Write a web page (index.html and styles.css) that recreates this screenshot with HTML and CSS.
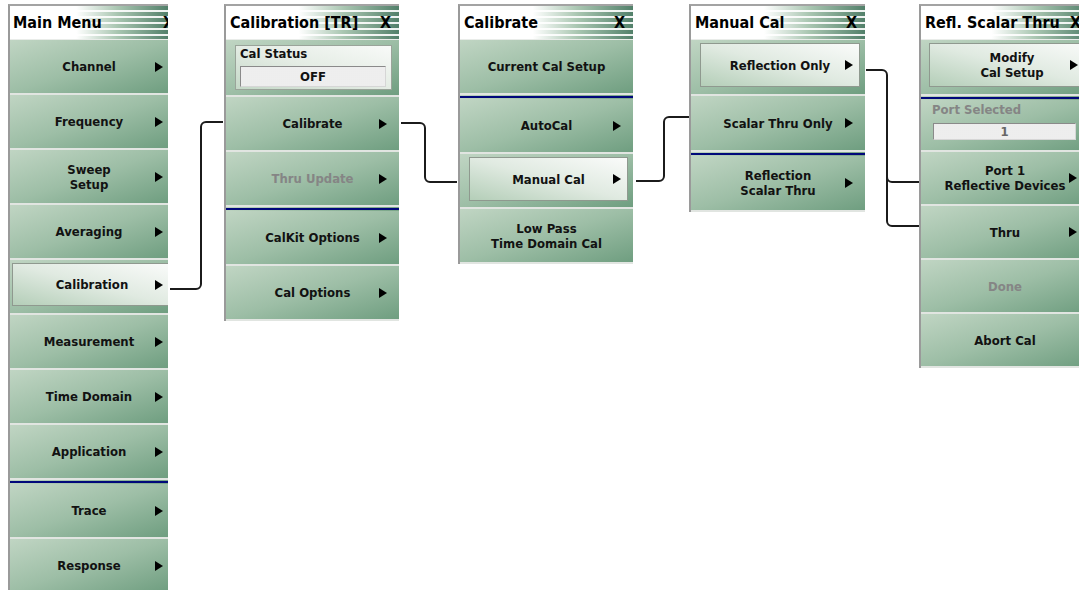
FILE: index.html
```html
<!DOCTYPE html>
<html>
<head>
<meta charset="utf-8">
<title>Calibration menus</title>
<link rel="stylesheet" href="styles.css">
</head>
<body>
<div class="canvas">

  <div class="panel p1">
    <div class="title"><span>Main Menu</span><span class="x">X</span></div>
    <div class="item"><span>Channel</span><i class="arrow"></i></div>
    <div class="item"><span>Frequency</span><i class="arrow"></i></div>
    <div class="item"><span>Sweep<br>Setup</span><i class="arrow"></i></div>
    <div class="item"><span>Averaging</span><i class="arrow"></i></div>
    <div class="item sel"><div class="btn"><span>Calibration</span><i class="arrow"></i></div></div>
    <div class="item"><span>Measurement</span><i class="arrow"></i></div>
    <div class="item"><span>Time Domain</span><i class="arrow"></i></div>
    <div class="item"><span>Application</span><i class="arrow"></i></div>
    <div class="sep"></div>
    <div class="item"><span>Trace</span><i class="arrow"></i></div>
    <div class="item"><span>Response</span><i class="arrow"></i></div>
  </div>

  <div class="panel p2">
    <div class="title"><span>Calibration [TR]</span><span class="x">X</span></div>
    <div class="group">
      <div class="gbox">
        <div class="glabel">Cal Status</div>
        <div class="field">OFF</div>
      </div>
    </div>
    <div class="item"><span>Calibrate</span><i class="arrow"></i></div>
    <div class="item off"><span>Thru Update</span><i class="arrow"></i></div>
    <div class="sep"></div>
    <div class="item"><span>CalKit Options</span><i class="arrow"></i></div>
    <div class="item"><span>Cal Options</span><i class="arrow"></i></div>
  </div>

  <div class="panel p3">
    <div class="title"><span>Calibrate</span><span class="x">X</span></div>
    <div class="item"><span>Current Cal Setup</span></div>
    <div class="sep"></div>
    <div class="item"><span>AutoCal</span><i class="arrow"></i></div>
    <div class="item sel"><div class="btn"><span>Manual Cal</span><i class="arrow"></i></div></div>
    <div class="item"><span>Low Pass<br>Time Domain Cal</span></div>
  </div>

  <div class="panel p4">
    <div class="title"><span>Manual Cal</span><span class="x">X</span></div>
    <div class="item sel"><div class="btn"><span>Reflection Only</span><i class="arrow"></i></div></div>
    <div class="item"><span>Scalar Thru Only</span><i class="arrow"></i></div>
    <div class="sep"></div>
    <div class="item"><span>Reflection<br>Scalar Thru</span><i class="arrow"></i></div>
  </div>

  <div class="panel p5">
    <div class="title"><span>Refl. Scalar Thru</span><span class="x">X</span></div>
    <div class="item sel tall"><div class="btn"><span>Modify<br>Cal Setup</span><i class="arrow"></i></div></div>
    <div class="sep"></div>
    <div class="group port">
      <div class="glabel dim">Port Selected</div>
      <div class="field small">1</div>
    </div>
    <div class="item"><span>Port 1<br>Reflective Devices</span><i class="arrow"></i></div>
    <div class="item"><span>Thru</span><i class="arrow"></i></div>
    <div class="item off"><span>Done</span></div>
    <div class="item"><span>Abort Cal</span></div>
  </div>

  <svg class="wires" width="1079" height="590" viewBox="0 0 1079 590">
    <path d="M170 289 H196 A5 5 0 0 0 201 284 V127 A5 5 0 0 1 206 122 H223"/>
    <path d="M401 123 H420 A5 5 0 0 1 425 128 V177 A5 5 0 0 0 430 182 H457"/>
    <path d="M636 181 H659 A5 5 0 0 0 664 176 V122 A5 5 0 0 1 669 117 H689"/>
    <path d="M866 70 H882 A5 5 0 0 1 887 75 V221 A5 5 0 0 0 892 226 H919"/>
    <path d="M887 177 A5 5 0 0 0 892 182 H919"/>
  </svg>
</div>
</body>
</html>
```

FILE: styles.css
```css
* { box-sizing: border-box; }

body {
  margin: 0;
  background: #ffffff;
  font-family: "DejaVu Sans Condensed", "DejaVu Sans", sans-serif;
  font-stretch: condensed;
  font-weight: bold;
  color: #111;
}

.canvas {
  position: relative;
  width: 1079px;
  height: 590px;
  overflow: hidden;
  display: flex;
  align-items: flex-start;
  padding: 4px 0 0 8px;
}

.panel {
  flex: none;
  width: 175px;
  position: relative;
  overflow: hidden;
  border-left: 2px solid #9a9a9a;
  border-top: 2px solid #a3a3a3;
  --h: 55px;
}

.p1 { width: 160px; }
.p2 { margin-left: 56px; }
.p3 { margin-left: 59px; }
.p4 { margin-left: 56px; width: 176px; --h: 56px; }
.p5 { margin-left: 54px; width: 170px; --h: 54px; }

/* title bar */
.title {
  height: 34px;
  position: relative;
  display: flex;
  align-items: center;
  padding: 0 4px;
  font-size: 16px;
  line-height: 18px;
  color: #000;
  border-bottom: 1px solid #e9ece9;
  background:
    repeating-linear-gradient(to bottom, rgba(255,255,255,0) 0 4px, rgba(255,255,255,0.9) 4px 6px),
    linear-gradient(to right, #ffffff 0%, #ffffff 42%, #a9c6b1 68%, #52806a 100%);
}
.p1 .title { padding-left: 3px; }
.title .x {
  position: absolute;
  right: 8px;
  top: 8px;
}
.p1 .title .x { right: -6px; }

/* menu items */
.item {
  height: var(--h);
  position: relative;
  display: flex;
  align-items: center;
  justify-content: center;
  text-align: center;
  font-size: 13px;
  line-height: 15px;
  color: #121212;
  border-bottom: 2px solid #e1e5e1;
  background: linear-gradient(to bottom right, #c0d5c3 0%, #9dbea6 50%, #6f9e80 100%);
}
.item.off { color: #858585; }
.item.tall { height: 56px; }

.arrow {
  position: absolute;
  right: 12px;
  top: 50%;
  margin-top: -5px;
  width: 0;
  height: 0;
  border-left: 8px solid #000;
  border-top: 5px solid transparent;
  border-bottom: 5px solid transparent;
}
.p1 .item > .arrow { right: 5px; }

/* pressed / selected button */
.item.sel {
  align-items: flex-start;
  padding: 3px 5px 0 9px;
}
.btn {
  flex: 1;
  height: 44px;
  position: relative;
  display: flex;
  align-items: center;
  justify-content: center;
  border: 1px solid #8f998f;
  background: linear-gradient(to top right, #b4ceb8 0%, #e0eae1 50%, #fafbfa 100%);
}
.btn .arrow { right: 6px; }
.p1 .item.sel { padding: 3px 0 0 2px; }
.p1 .btn { height: 43px; margin-right: -4px; }
.p1 .btn .arrow { right: 8px; }
.p5 .item.sel { padding-left: 8px; padding-right: 0; }
.p5 .btn { margin-right: -6px; }
.p5 .btn .arrow { right: 16px; }

/* separator with navy rule */
.sep {
  height: 4px;
  background:
    linear-gradient(#00087a, #00087a) 0 1px / 100% 2px no-repeat,
    linear-gradient(to right, #bcd3bf, #7aa688);
}

/* status groups */
.group {
  height: 57px;
  padding: 5px 7px 0 9px;
  border-bottom: 2px solid #e1e5e1;
  background: linear-gradient(to bottom right, #c0d5c3 0%, #9dbea6 50%, #6f9e80 100%);
}
.gbox {
  height: 45px;
  padding: 0 5px 0 4px;
  border: 1px solid #9aa49a;
  background: linear-gradient(to top right, #c4d8c7 0%, #e4ece4 50%, #f8faf8 100%);
}
.glabel {
  font-size: 13px;
  line-height: 16px;
  text-align: left;
  color: #111;
}
.glabel.dim { color: #858585; }

.field {
  height: 21px;
  margin-top: 4px;
  font-size: 13px;
  line-height: 19px;
  text-align: center;
  color: #111;
  border: 1px solid #8a8a8a;
  border-right-color: #d6d6d6;
  border-bottom-color: #d6d6d6;
  background-color: #f8f8f8;
  background-image: radial-gradient(#e2e2e2 0.6px, transparent 0.8px);
  background-size: 2px 2px;
}

.group.port {
  height: 52px;
  padding: 2px 0 0 11px;
}
.field.small {
  height: 17px;
  width: 143px;
  margin: 5px 0 0 1px;
  line-height: 15px;
  color: #666;
}

/* connector lines */
.wires {
  position: absolute;
  left: 0;
  top: 0;
  pointer-events: none;
}
.wires path {
  fill: none;
  stroke: #1b1b1b;
  stroke-width: 2;
}
```
